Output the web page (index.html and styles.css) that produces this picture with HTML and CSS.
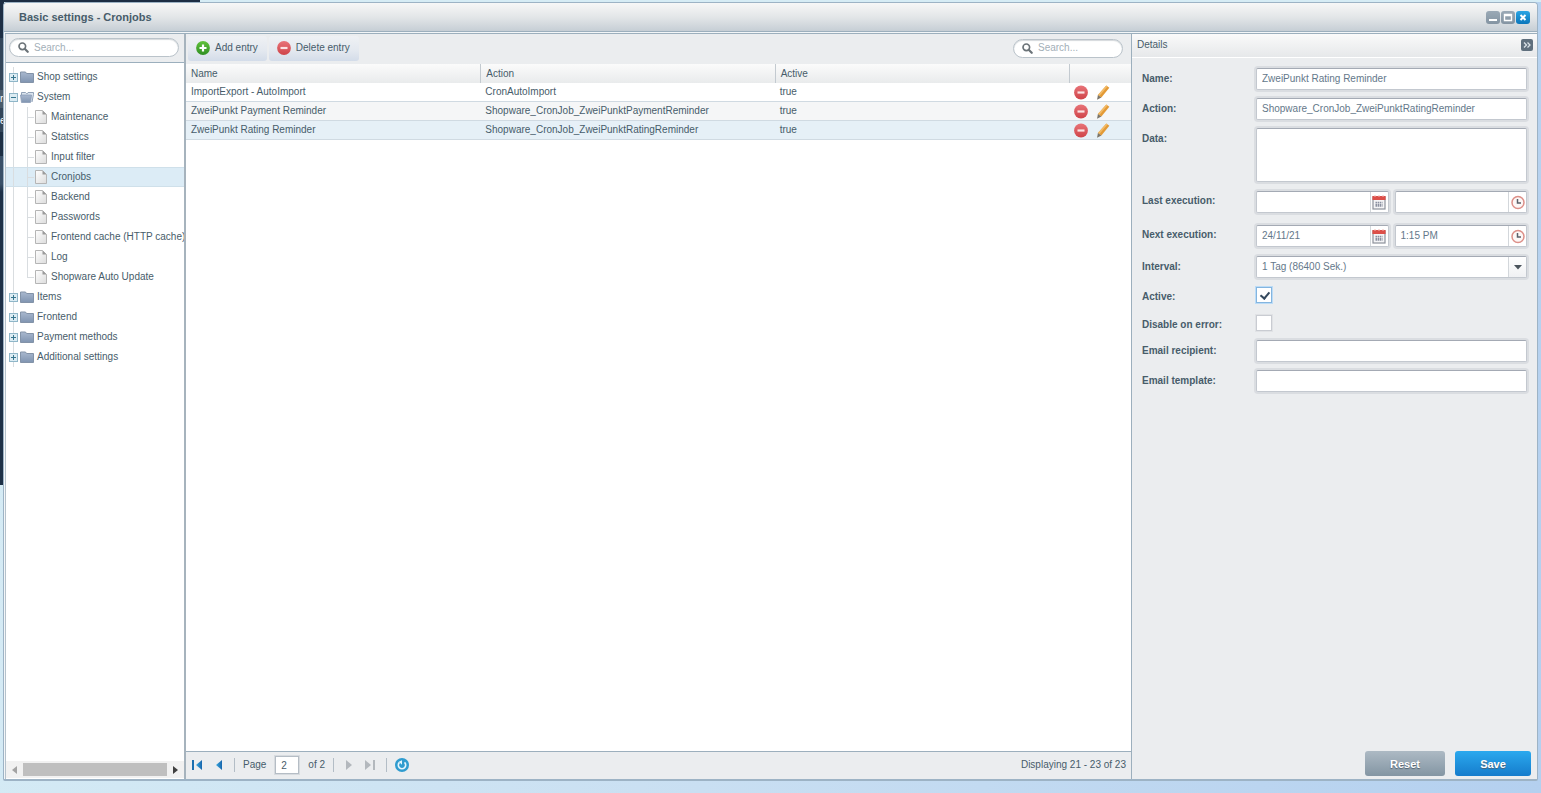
FILE: index.html
```html
<!DOCTYPE html>
<html lang="en">
<head>
<meta charset="utf-8">
<title>Basic settings - Cronjobs</title>
<link rel="stylesheet" href="styles.css">
</head>
<body>
<svg class="defs" aria-hidden="true">
  <defs>
    <linearGradient id="g-folder" x1="0" y1="0" x2="0" y2="1"><stop offset="0" stop-color="#a9b8cf"/><stop offset="1" stop-color="#7f94b0"/></linearGradient>
    <linearGradient id="g-page" x1="0" y1="0" x2="1" y2="1"><stop offset="0" stop-color="#ffffff"/><stop offset="1" stop-color="#dcdcdc"/></linearGradient>
    <linearGradient id="g-red" x1="0" y1="0" x2="0" y2="1"><stop offset="0" stop-color="#e87378"/><stop offset="1" stop-color="#cf4449"/></linearGradient>
    <linearGradient id="g-green" x1="0" y1="0" x2="0" y2="1"><stop offset="0" stop-color="#62c23c"/><stop offset="1" stop-color="#2f8f22"/></linearGradient>
    <linearGradient id="g-blue" x1="0" y1="0" x2="1" y2="0"><stop offset="0" stop-color="#3aa9e0"/><stop offset="1" stop-color="#1766ac"/></linearGradient>
    <symbol id="i-search" viewBox="0 0 12 12"><circle cx="4.7" cy="4.7" r="3.6" fill="none" stroke="#6b7378" stroke-width="1.8"/><path d="M7.6 7.6 10.600 10.600" stroke="#6b7378" stroke-width="2.400" stroke-linecap="round"/></symbol>
    <symbol id="i-folder" viewBox="0 0 14 12"><path d="M.5 1h5l1 1.500H13.500v9H.5z" fill="url(#g-folder)" stroke="#8393a8"/></symbol>
    <symbol id="i-open" viewBox="0 0 14 12"><path d="M1.500 6V1.500h4l1 1h1l.5-1h5.500v2l-1.500 7.500" fill="#dbe4ee" stroke="#8798b0" stroke-width=".9"/><path d="M.5 4h11l-1 7.500H1.500z" fill="url(#g-folder)" stroke="#8b9cb6" stroke-width=".8"/></symbol>
    <symbol id="i-page" viewBox="0 0 12 14"><path d="M.5.5h7l4 4v9H.5z" fill="url(#g-page)" stroke="#b5b5b5"/><path d="M7.500.5v4h4z" fill="#9b9b9b"/></symbol>
    <symbol id="i-minus" viewBox="0 0 14 14"><circle cx="7" cy="7" r="6.900" fill="url(#g-red)"/><rect x="3.500" y="5.900" width="7" height="2.200" fill="#fbe3e3"/></symbol>
    <symbol id="i-plus" viewBox="0 0 14 14"><circle cx="7" cy="7" r="6.900" fill="url(#g-green)"/><path d="M7 3.500v7M3.500 7h7" stroke="#fff" stroke-width="2.200"/></symbol>
    <symbol id="i-pencil" viewBox="0 0 13 15"><path d="M9.800.6 12.800 2.800 4.900 12.500 1.400 10z" fill="#e39a36"/><path d="M9.800.6 11 1.500 2.900 11 1.400 10z" fill="#f2bb68"/><path d="M1.400 10 4.900 12.500.6 14.700z" fill="#7a7468"/></symbol>
    <symbol id="i-cal" viewBox="0 0 14 15"><rect x="1" y="2" width="12" height="12" fill="#f4f4f6" stroke="#8d919b" stroke-width="1.200"/><path d="M.4 1h13.200v4H.4z" fill="#dc4f49"/><path d="M3 0v2M7 0v2M11 0v2" stroke="#f3b7b3"/><path d="M3.500 7.500h7M3.500 9.500h7M3.500 11h7" stroke="#8a90a0" stroke-width="1.300" stroke-dasharray="1.500 .6"/></symbol>
    <symbol id="i-clock" viewBox="0 0 14 14"><circle cx="7" cy="7" r="6" fill="#fdf7f6" stroke="#dd9089" stroke-width="1.500"/><path d="M6.500 3.500v4h3.500" fill="none" stroke="#596069" stroke-width="1.500"/></symbol>
    <symbol id="i-exp" viewBox="0 0 9 9"><rect x=".5" y=".5" width="8" height="8" fill="#dcecf3" stroke="#8fb6c8"/><path d="M2 4.500h5M4.500 2v5" stroke="#37758d"/></symbol>
    <symbol id="i-col" viewBox="0 0 9 9"><rect x=".5" y=".5" width="8" height="8" fill="#dcecf3" stroke="#8fb6c8"/><path d="M2 4.500h5" stroke="#37758d"/></symbol>
  </defs>
</svg>
<div class="desktop">
  <div class="backdrop" aria-hidden="true"><span>r</span><span>e</span></div>
  <main class="window">
    <header class="titlebar">
      <h1>Basic settings - Cronjobs</h1>
      <div class="tools">
        <button class="tool" aria-label="Minimize"><svg viewBox="0 0 14 13"><path d="M3 9h8" stroke="#fff" stroke-width="2"/></svg></button>
        <button class="tool" aria-label="Maximize"><svg viewBox="0 0 14 13"><path d="M3.500 3.500h7v6h-7zM3.500 4.500h7" fill="none" stroke="#fff" stroke-width="1.400"/></svg></button>
        <button class="tool close" aria-label="Close"><svg viewBox="0 0 14 13"><path d="M4.500 4l5 5M9.500 4l-5 5" stroke="#fff" stroke-width="2"/></svg></button>
      </div>
    </header>
    <div class="content">
      <nav class="sidebar" aria-label="Settings">
        <div class="side-search">
          <label class="search"><svg><use href="#i-search"/></svg><input type="text" placeholder="Search..." aria-label="Search settings"></label>
        </div>
        <ul class="tree">
          <li class="node"><svg class="exp"><use href="#i-exp"/></svg><svg class="folder"><use href="#i-folder"/></svg><a href="#">Shop settings</a></li>
          <li class="node"><svg class="exp"><use href="#i-col"/></svg><svg class="folder"><use href="#i-open"/></svg><a href="#">System</a></li>
          <li class="leaf"><svg><use href="#i-page"/></svg><a href="#">Maintenance</a></li>
          <li class="leaf"><svg><use href="#i-page"/></svg><a href="#">Statstics</a></li>
          <li class="leaf"><svg><use href="#i-page"/></svg><a href="#">Input filter</a></li>
          <li class="leaf selected"><svg><use href="#i-page"/></svg><a href="#" aria-current="page">Cronjobs</a></li>
          <li class="leaf"><svg><use href="#i-page"/></svg><a href="#">Backend</a></li>
          <li class="leaf"><svg><use href="#i-page"/></svg><a href="#">Passwords</a></li>
          <li class="leaf"><svg><use href="#i-page"/></svg><a href="#">Frontend cache (HTTP cache)</a></li>
          <li class="leaf"><svg><use href="#i-page"/></svg><a href="#">Log</a></li>
          <li class="leaf last"><svg><use href="#i-page"/></svg><a href="#">Shopware Auto Update</a></li>
          <li class="node"><svg class="exp"><use href="#i-exp"/></svg><svg class="folder"><use href="#i-folder"/></svg><a href="#">Items</a></li>
          <li class="node"><svg class="exp"><use href="#i-exp"/></svg><svg class="folder"><use href="#i-folder"/></svg><a href="#">Frontend</a></li>
          <li class="node"><svg class="exp"><use href="#i-exp"/></svg><svg class="folder"><use href="#i-folder"/></svg><a href="#">Payment methods</a></li>
          <li class="node"><svg class="exp"><use href="#i-exp"/></svg><svg class="folder"><use href="#i-folder"/></svg><a href="#">Additional settings</a></li>
        </ul>
        <div class="scrollbar">
          <button aria-label="Scroll left"><svg viewBox="0 0 5 8"><path d="M5 0v8L0 4z" fill="#a3a3a3"/></svg></button>
          <span class="thumb"></span>
          <button aria-label="Scroll right"><svg viewBox="0 0 5 8"><path d="M0 0v8l5-4z" fill="#404040"/></svg></button>
        </div>
      </nav>
      <section class="grid">
        <div class="toolbar">
          <button class="action"><svg><use href="#i-plus"/></svg>Add entry</button>
          <button class="action"><svg><use href="#i-minus"/></svg>Delete entry</button>
          <label class="search narrow"><svg><use href="#i-search"/></svg><input type="text" placeholder="Search..." aria-label="Search entries"></label>
        </div>
        <div class="rows">
          <table>
            <thead><tr><th>Name</th><th>Action</th><th>Active</th><th class="ops" aria-label="Options"></th></tr></thead>
            <tbody>
              <tr><td>ImportExport - AutoImport</td><td>CronAutoImport</td><td>true</td><td class="ops"><div><button aria-label="Delete"><svg><use href="#i-minus"/></svg></button><button aria-label="Edit"><svg><use href="#i-pencil"/></svg></button></div></td></tr>
              <tr class="alt"><td>ZweiPunkt Payment Reminder</td><td>Shopware_CronJob_ZweiPunktPaymentReminder</td><td>true</td><td class="ops"><div><button aria-label="Delete"><svg><use href="#i-minus"/></svg></button><button aria-label="Edit"><svg><use href="#i-pencil"/></svg></button></div></td></tr>
              <tr class="current"><td>ZweiPunkt Rating Reminder</td><td>Shopware_CronJob_ZweiPunktRatingReminder</td><td>true</td><td class="ops"><div><button aria-label="Delete"><svg><use href="#i-minus"/></svg></button><button aria-label="Edit"><svg><use href="#i-pencil"/></svg></button></div></td></tr>
            </tbody>
          </table>
        </div>
        <footer class="paging">
          <button aria-label="First page"><svg viewBox="0 0 14 14"><path d="M3 2v10" stroke="#1a6fb0" stroke-width="2"/><path d="M12 2v10L6 7z" fill="url(#g-blue)"/></svg></button>
          <button aria-label="Previous page"><svg viewBox="0 0 14 14"><path d="M10 2v10L4 7z" fill="url(#g-blue)"/></svg></button>
          <i class="sep"></i>
          <label for="page">Page</label>
          <input id="page" type="text" value="2">
          <span>of 2</span>
          <i class="sep"></i>
          <button aria-label="Next page" disabled><svg viewBox="0 0 14 14"><path d="M4 2v10l6-5z" fill="#b3b8bd"/></svg></button>
          <button aria-label="Last page" disabled><svg viewBox="0 0 14 14"><path d="M1 2v10l6-5z" fill="#b3b8bd"/><path d="M10 2v10" stroke="#b3b8bd" stroke-width="2"/></svg></button>
          <i class="sep"></i>
          <button aria-label="Refresh"><svg viewBox="0 0 14 14"><circle cx="7" cy="7" r="7" fill="#2f9ccf"/><path d="M4.500 4.300A3.700 3.700 0 1 0 9.500 4.300" fill="none" stroke="#e6f6fd" stroke-width="1.600"/><path d="M7 2.200v4.600L3.800 3.800z" fill="#e6f6fd"/></svg></button>
          <output>Displaying 21 - 23 of 23</output>
        </footer>
      </section>
      <section class="details">
        <header class="details-head"><h2>Details</h2><button aria-label="Collapse details"><svg viewBox="0 0 12 12"><path d="M3 3.500 5.500 6 3 8.500M6.500 3.500 9 6 6.500 8.500" fill="none" stroke="#d9e1e7" stroke-width="1.300"/></svg></button></header>
        <form class="form" id="details-form">
          <div class="row"><label for="f-name">Name:</label><input class="field" id="f-name" type="text" value="ZweiPunkt Rating Reminder"></div>
          <div class="row"><label for="f-action">Action:</label><input class="field" id="f-action" type="text" value="Shopware_CronJob_ZweiPunktRatingReminder"></div>
          <div class="row"><label for="f-data">Data:</label><textarea class="field" id="f-data"></textarea></div>
          <div class="row date"><label for="f-last">Last execution:</label><div class="pair">
            <div class="trigger"><input id="f-last" type="text"><button type="button" aria-label="Pick last date"><svg><use href="#i-cal"/></svg></button></div>
            <div class="trigger"><input type="text" aria-label="Last execution time"><button type="button" aria-label="Pick last time"><svg><use href="#i-clock"/></svg></button></div></div></div>
          <div class="row date"><label for="f-next">Next execution:</label><div class="pair">
            <div class="trigger"><input id="f-next" type="text" value="24/11/21"><button type="button" aria-label="Pick next date"><svg><use href="#i-cal"/></svg></button></div>
            <div class="trigger"><input type="text" value="1:15 PM" aria-label="Next execution time"><button type="button" aria-label="Pick next time"><svg><use href="#i-clock"/></svg></button></div></div></div>
          <div class="row"><label for="f-int">Interval:</label><div class="combo"><select class="field" id="f-int"><option>1 Tag (86400 Sek.)</option></select><span class="arrow"><svg viewBox="0 0 8 5"><path d="M0 0h8L4 4.500z" fill="#4b545c"/></svg></span></div></div>
          <div class="row check"><label for="f-active">Active:</label><input id="f-active" type="checkbox" checked></div>
          <div class="row check"><label for="f-dis">Disable on error:</label><input id="f-dis" type="checkbox"></div>
          <div class="row"><label for="f-rec">Email recipient:</label><input class="field" id="f-rec" type="text"></div>
          <div class="row"><label for="f-tpl">Email template:</label><input class="field" id="f-tpl" type="text"></div>
        </form>
        <div class="buttons"><button class="reset" type="reset" form="details-form">Reset</button><button class="save" type="submit" form="details-form">Save</button></div>
      </section>
    </div>
  </main>
</div>
</body>
</html>
```
FILE: styles.css
```css
* { box-sizing: border-box; }
body { margin: 0; font: 10px/12px "Liberation Sans", Arial, sans-serif; color: #475c6a; }
button, input, select, textarea { font: inherit; color: inherit; margin: 0; padding: 0; border: 0; background: none; outline: 0; }
h1, h2, ul { margin: 0; padding: 0; font-size: inherit; }
svg { display: block; flex: none; }
a { color: inherit; text-decoration: none; }
button { display: flex; align-items: center; justify-content: center; }
.defs { position: absolute; width: 0; height: 0; }

.desktop { position: relative; height: 100vh; padding: 2px 3px 12px; display: flex; background: linear-gradient(100deg, #d6ecf5 0%, #c9dff2 50%, #b4d0ef 100%); }
.desktop::after { content: ""; position: absolute; top: 0; right: 0; left: 200px; height: 2px; background: #d6ecf5; }
.backdrop { position: absolute; left: 0; top: 0; width: 200px; height: 485px; padding-top: 88px; line-height: 22px; color: #fff; background: linear-gradient(#1d2e44 0 38px, #33465a 38px 90px, #4a5c6c 90px 108px, #33465a 108px 132px, #1d2f44 132px 156px, #3a5068 156px 184px, #1d3047 192px); clip-path: polygon(0 0, 100% 0, 100% 2px, 4px 2px, 4px 100%, 0 100%); }
.backdrop span { display: block; }

.window { position: relative; flex: 1; min-width: 0; display: flex; flex-direction: column; border: 1px solid #9db3c5; border-bottom-width: 2px; border-radius: 4px 4px 2px 2px; background: #f3f6f8; padding: 0 0 0 1px; }
.titlebar { display: flex; align-items: center; justify-content: space-between; height: 29px; flex: none; margin-left: -1px; padding: 0 7px 0 15px; background: linear-gradient(#f7f7f7, #e3e6e8 50%, #c6ced5); border-bottom: 1px solid #9cafbd; border-radius: 4px 4px 0 0; }
.titlebar h1 { font-size: 11px; color: #475c6a; }
.tools { display: flex; gap: 1px; }
.tool { width: 14px; height: 13px; border-radius: 3px; background: linear-gradient(#9aa9b6, #8494a2); }
.tool svg { width: 14px; height: 13px; }
.close { background: linear-gradient(#2ba5e4, #0b76bb); }
.content { flex: 1; min-height: 0; display: flex; margin-top: 1px; border-top: 1px solid #9cafbd; }

.search { display: flex; align-items: center; gap: 5px; height: 19px; padding: 0 8px; border: 1px solid #bac3ca; border-radius: 10px; background: #fff; box-shadow: inset 0 1px 1px #d5d9dc; }
.search svg { width: 11px; height: 11px; }
.search input { flex: 1; min-width: 0; }
.search input::placeholder { color: #a3afb8; opacity: 1; }
.sidebar { width: 181px; flex: none; display: flex; flex-direction: column; background: #fff; border-left: 1px solid #b5c2cc; border-right: 2px solid #a6b3bd; }
.side-search { padding: 4px 5px 5px 3px; background: #ebedef; border-bottom: 1px solid #9cafbd; }
.tree { flex: 1; min-height: 0; overflow: hidden; list-style: none; padding-top: 4px; }
.tree li { display: flex; align-items: center; height: 20px; white-space: nowrap; background: linear-gradient(90deg, transparent 7px, #d9dde0 7px 8px, transparent 8px); }
.tree .node { padding-left: 3px; }
.exp { width: 9px; height: 9px; }
.folder { width: 14px; height: 12px; margin: 0 3px 0 2px; }
.tree .leaf { padding-left: 29px; background: linear-gradient(#d9dde0, #d9dde0) 21px 50% / 7px 1px no-repeat, linear-gradient(#d9dde0, #d9dde0) 21px 0 / 1px 100% no-repeat, linear-gradient(#d9dde0, #d9dde0) 7px 0 / 1px 100% no-repeat; }
.tree .last { background-size: 7px 1px, 1px 50%, 1px 100%; }
.tree .selected { background-color: #dcecf6; box-shadow: inset 0 1px #cfe0ea, inset 0 -1px #cfe0ea; }
.leaf svg { width: 12px; height: 14px; margin-right: 4px; }
.scrollbar { display: flex; height: 17px; background: #f1f1f1; margin-bottom: 1px; }
.scrollbar button { width: 17px; }
.scrollbar svg { width: 5px; height: 8px; }
.thumb { flex: 1; margin: 2px 0; background: #bfbfbf; }

.grid { flex: 1; min-width: 0; display: flex; flex-direction: column; background: #fff; border-right: 1px solid #9cafbd; }
.toolbar { display: flex; align-items: center; gap: 2px; height: 30px; flex: none; padding: 0 8px 2px 2px; background: #ebedef; }
.action { gap: 5px; height: 25px; padding: 0 9px 0 8px; border-radius: 3px; background: linear-gradient(#eff1f4, #e3e8ef 60%, #d3dce9); }
.action svg { width: 14px; height: 14px; }
.narrow { width: 110px; margin-left: auto; }
.rows { flex: 1; min-height: 0; overflow: hidden; }
table { width: 100%; table-layout: fixed; border-collapse: separate; border-spacing: 0; }
th { height: 19px; padding: 0 5px; text-align: left; font-weight: normal; background: linear-gradient(#fbfbfb, #e9ebec); border-left: 1px solid #c3cad0; }
th:first-child { border-left-color: transparent; padding-left: 4px; }
td { height: 19px; padding: 0 5px; border-bottom: 1px solid #d0dae2; white-space: nowrap; }
.alt td { background: #f5f6f7; }
.current td { background: #e6f0f7; }
.ops { width: 62px; }
.ops div { display: flex; gap: 8px; align-items: center; }
.ops button svg { width: 14px; height: 15px; }
.paging { display: flex; align-items: center; height: 28px; flex: none; padding: 0 5px 1px 4px; background: #ebedef; border-top: 1px solid #9cafbd; }
.paging svg { width: 14px; height: 14px; }
.paging button + button { margin-left: 8px; }
.sep { width: 1px; height: 14px; margin: 0 8px; background: #b3bdc6; }
.paging input { width: 24px; height: 18px; margin: 0 9px; padding-left: 5px; background: #fff; border: 1px solid #b5bdc5; box-shadow: 0 0 0 1px #d7dbdf; }
.paging output { margin-left: auto; }

.details { width: 405px; flex: none; display: flex; flex-direction: column; background: #ebedef; }
.details-head { display: flex; align-items: center; justify-content: space-between; height: 24px; padding: 0 4px 1px 5px; background: linear-gradient(#fafafa, #e6e8ea); border-bottom: 1px solid #fff; }
.details-head h2 { font-weight: normal; }
.details-head button { width: 12px; height: 12px; border-radius: 2px; background: #5f6f7d; }
.details-head svg { width: 12px; height: 12px; }
.form { flex: 1; padding: 10px 10px 0; }
.row { display: flex; align-items: flex-start; margin-bottom: 8px; }
.row > label { width: 114px; flex: none; padding-top: 5px; font-weight: bold; }
.row.date > label, .row.check > label { padding-top: 4px; }
.field, .trigger { flex: 1 1 0; min-width: 0; height: 22px; padding: 0 5px 2px; background: #fff; border: 1px solid #c3c8cf; border-top-color: #a4aab4; border-radius: 2px; box-shadow: 0 0 0 2px #dadde1; color: #64788a; }
textarea.field { height: 54px; resize: none; }
.date { margin: 9px 0; }
.date + .date { margin-top: 12px; }
.pair { flex: 1; min-width: 0; display: flex; gap: 6px; }
.trigger { display: flex; padding: 0 0 0 5px; }
.trigger input { flex: 1 1 0; width: 0; min-width: 0; }
.trigger button { flex: none; width: 18px; border-left: 1px solid #d3d7db; }
.trigger svg { width: 14px; height: 15px; }
.combo { position: relative; flex: 1; display: flex; }
select.field { appearance: none; padding-bottom: 0; }
.arrow { position: absolute; top: 1px; right: 1px; bottom: 1px; width: 18px; display: flex; align-items: center; justify-content: center; border-left: 1px solid #d3d7db; background: linear-gradient(#fff, #f0f1f3); pointer-events: none; }
.arrow svg { width: 8px; height: 5px; }
.check { margin: 9px 0; }
.check + .check { margin-top: 12px; }
.check input { appearance: none; width: 16px; height: 16px; background: #fff; border: 1px solid #c9ccd2; box-shadow: 0 0 0 1px #e0e2e5; }
.check input:checked { border-color: #84b5df; box-shadow: 0 0 0 1px #bbdcf7; background: #fff; }
.check input:checked::after { content: ""; display: block; width: 4px; height: 7px; margin: 2px 0 0 5px; border: solid #34495e; border-width: 0 2px 2px 0; transform: rotate(40deg); }
.buttons { display: flex; justify-content: flex-end; gap: 10px; padding: 0 6px 3px; }
.buttons button { height: 25px; border-radius: 3px; font-size: 11px; font-weight: bold; color: #fff; text-shadow: 0 1px 1px #50606e; }
.reset { width: 80px; background: linear-gradient(#adbac4, #8395a3); }
.save { width: 76px; background: linear-gradient(#2ba9ee, #157ccc); }
```
